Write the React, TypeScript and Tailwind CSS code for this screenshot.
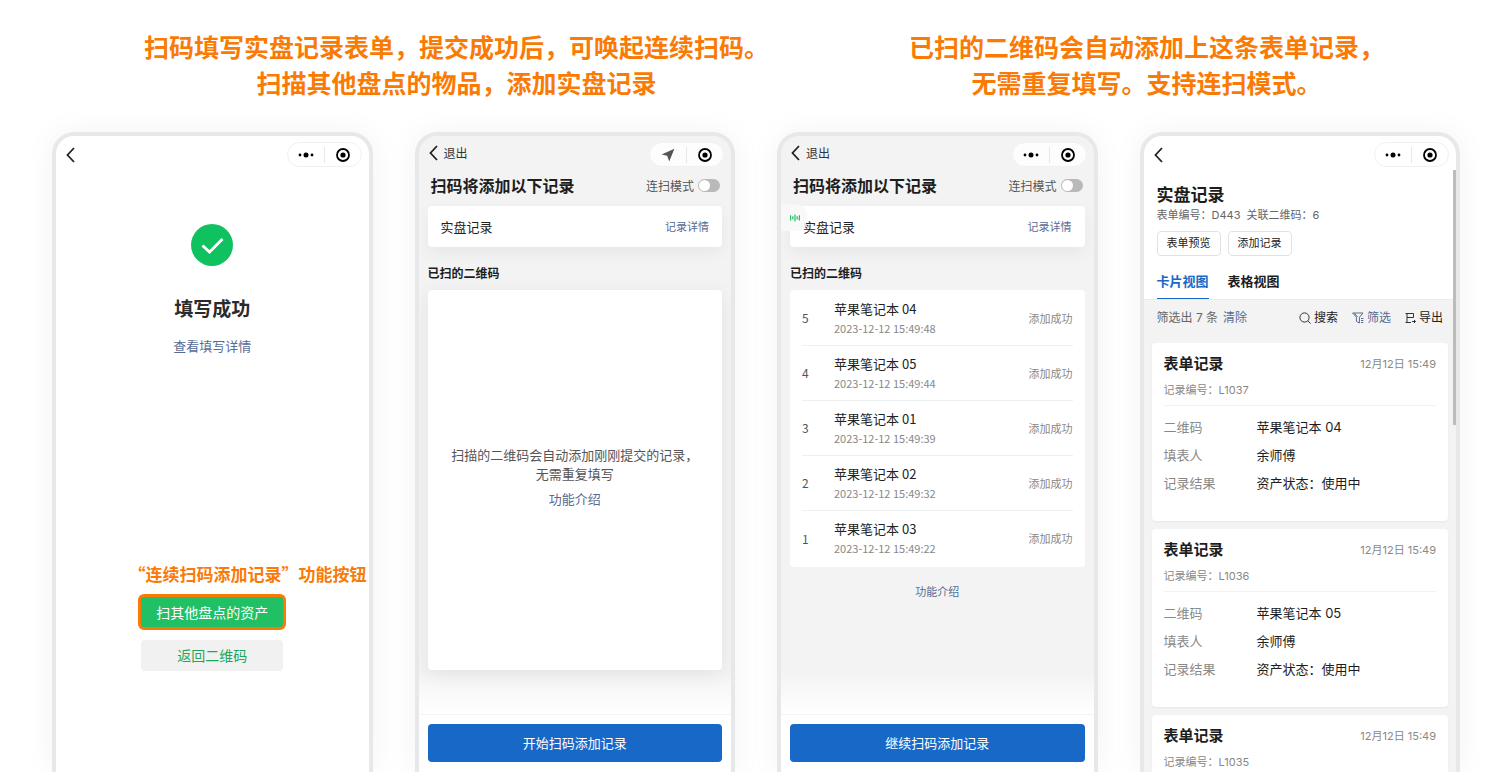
import type { ReactNode } from 'react';

const scans = [
  { index: 5, name: '苹果笔记本 04', time: '2023-12-12 15:49:48' },
  { index: 4, name: '苹果笔记本 05', time: '2023-12-12 15:49:44' },
  { index: 3, name: '苹果笔记本 01', time: '2023-12-12 15:49:39' },
  { index: 2, name: '苹果笔记本 02', time: '2023-12-12 15:49:32' },
  { index: 1, name: '苹果笔记本 03', time: '2023-12-12 15:49:22' },
];

const records = [
  { id: 'L1037', code: '苹果笔记本 04' },
  { id: 'L1036', code: '苹果笔记本 05' },
  { id: 'L1035', code: '苹果笔记本 01' },
];

function Chevron() {
  return (
    <svg width="9" height="16" viewBox="0 0 9 16" fill="none" stroke="#222" strokeWidth="1.8">
      <path d="M8 1 L1.5 8 L8 15" />
    </svg>
  );
}

function Capsule({ locating = false }: { locating?: boolean }) {
  return (
    <div className="flex h-[25px] w-[75px] items-center rounded-full border border-[#f0f0f0] bg-white/80">
      <button type="button" aria-label="更多" className="flex h-full flex-1 items-center justify-center">
        {locating ? (
          <svg width="14" height="14" viewBox="0 0 14 14" fill="#555">
            <path d="M13.4 0.8 L0.6 6.4 L6.2 7.8 L8.2 13.4 Z" />
          </svg>
        ) : (
          <svg width="16" height="6" viewBox="0 0 16 6" fill="#000">
            <circle cx="2" cy="3" r="1.4" />
            <circle cx="8" cy="3" r="2.5" />
            <circle cx="14" cy="3" r="1.4" />
          </svg>
        )}
      </button>
      <span className="h-4 w-px bg-[#e8e8e8]" />
      <button type="button" aria-label="关闭" className="flex h-full flex-1 items-center justify-center">
        <svg width="14" height="14" viewBox="0 0 14 14">
          <circle cx="7" cy="7" r="6" fill="none" stroke="#000" strokeWidth="1.8" />
          <circle cx="7" cy="7" r="2.6" fill="#000" />
        </svg>
      </button>
    </div>
  );
}

function Phone({ children, className }: { children: ReactNode; className: string }) {
  return (
    <section
      className={`relative flex min-w-0 flex-1 flex-col overflow-hidden rounded-t-[22px] border-4 border-b-0 border-[#e7e8ea] shadow-[0_0_32px_rgba(0,0,0,0.05)] ${className}`}
    >
      {children}
    </section>
  );
}

function NavBar({ label, locating }: { label?: string; locating?: boolean }) {
  return (
    <div className="flex h-[37px] shrink-0 items-center justify-between pr-[7px] pl-[10px]">
      {label ? (
        <button type="button" className="flex items-center gap-[6px] pb-1 text-[12px] leading-4 text-[#333]">
          <Chevron />
          {label}
        </button>
      ) : (
        <button type="button" aria-label="返回">
          <Chevron />
        </button>
      )}
      <Capsule locating={locating} />
    </div>
  );
}

function ScanHeader({ id }: { id: string }) {
  return (
    <>
      <div className="flex h-[25px] shrink-0 items-center justify-between pr-[2px] pl-[3px]">
        <h3 className="pb-[2px] text-[16px] font-bold text-[#1d1d1d]">扫码将添加以下记录</h3>
        <div className="flex items-center gap-1">
          <label htmlFor={id} className="text-[12px] text-[#555]">
            连扫模式
          </label>
          <input
            id={id}
            type="checkbox"
            role="switch"
            className="h-[13px] w-[22px] appearance-none rounded-full bg-[#b9b9b9] p-px before:block before:size-[11px] before:rounded-full before:bg-white checked:bg-[#1868c8] checked:before:ml-[9px]"
          />
        </div>
      </div>
      <div className="mt-2 flex h-[41px] shrink-0 items-center justify-between rounded bg-white px-[13px] shadow-[0_6px_16px_rgba(0,0,0,0.05)]">
        <span className="text-[13px] text-[#222]">实盘记录</span>
        <a href="#detail" className="text-[11px] text-[#576b95]">
          记录详情
        </a>
      </div>
      <h4 className="mt-[17px] shrink-0 text-[12px] leading-[18px] font-bold text-[#1d1d1d]">已扫的二维码</h4>
    </>
  );
}

function ScanFooter({ children }: { children: ReactNode }) {
  return (
    <div className="h-[58px] shrink-0 border-t border-[#f4f4f4] bg-white px-[9px] pt-[9px]">
      <button type="button" className="h-[38px] w-full rounded bg-[#1868c8] text-[13px] text-white">
        {children}
      </button>
    </div>
  );
}

function SuccessScreen() {
  return (
    <Phone className="bg-white">
      <NavBar />
      <div className="flex flex-col items-center">
        <svg className="mt-[51px]" width="42" height="42" viewBox="0 0 42 42">
          <circle cx="21" cy="21" r="21" fill="#10c160" />
          <path d="M11.5 21.5 L18.5 28 L31.5 15" fill="none" stroke="#fff" strokeWidth="2.8" />
        </svg>
        <h3 className="mt-7 text-[19px] leading-7 font-bold text-[#2b2b2b]">填写成功</h3>
        <a href="#filled" className="mt-[14px] text-[13px] leading-5 text-[#576b95]">
          查看填写详情
        </a>
        <p className="mt-[206px] self-end pr-[2px] text-[17px] leading-6 font-bold whitespace-nowrap text-[#f97b06]">
          “连续扫码添加记录”功能按钮
        </p>
        <button
          type="button"
          className="mt-2 h-9 w-[148px] rounded-md border-3 border-[#f97b06] bg-[#22c064] text-[14px] leading-7 text-white"
        >
          扫其他盘点的资产
        </button>
        <button type="button" className="mt-[10px] h-[31px] w-[142px] rounded-sm bg-[#f1f1f1] text-[14px] text-[#1fa757]">
          返回二维码
        </button>
      </div>
    </Phone>
  );
}

function StartScanScreen() {
  return (
    <Phone className="bg-[#f3f3f3]">
      <NavBar label="退出" locating />
      <div className="flex min-h-0 flex-1 flex-col bg-linear-to-b from-[#f3f3f3] from-92% to-white px-[9px]">
        <ScanHeader id="start-mode" />
        <div className="mt-2 mb-11 flex flex-1 flex-col items-center justify-center rounded bg-white pb-2 text-center text-[13px] leading-[19px] text-[#555] shadow-[0_4px_20px_rgba(0,0,0,0.07)]">
          <p>
            扫描的二维码会自动添加刚刚提交的记录，
            <br />
            无需重复填写
          </p>
          <a href="#intro" className="mt-[6px] text-[#576b95]">
            功能介绍
          </a>
        </div>
      </div>
      <ScanFooter>开始扫码添加记录</ScanFooter>
    </Phone>
  );
}

function ContinueScanScreen() {
  return (
    <Phone className="bg-[#f3f3f3]">
      <NavBar label="退出" />
      <div className="flex min-h-0 flex-1 flex-col bg-linear-to-b from-[#f3f3f3] from-92% to-white px-[9px]">
        <ScanHeader id="continue-mode" />
        <ul className="mt-2 rounded bg-white px-3 py-px">
          {scans.map((scan) => (
            <li key={scan.index} className="flex h-[55px] items-center border-b border-[#ebf0f0] last:border-b-0">
              <span className="w-8 text-[12px] text-[#555]">{scan.index}</span>
              <div className="flex-1 pb-px">
                <p className="text-[13px] leading-5 text-[#222]">{scan.name}</p>
                <p className="text-[11px] leading-[18px] text-[#888]">{scan.time}</p>
              </div>
              <span className="text-[11px] text-[#888]">添加成功</span>
            </li>
          ))}
        </ul>
        <a href="#intro" className="mt-4 self-center text-[11px] leading-4 text-[#576b95]">
          功能介绍
        </a>
      </div>
      <ScanFooter>继续扫码添加记录</ScanFooter>
      {/* floating voice handle, half over the form card */}
      <div className="absolute top-[68px] left-0 flex h-[27px] w-[26px] items-center rounded-r-[12px] bg-[#f8f8f8]/90 pl-[9px]">
        <svg width="10" height="8" viewBox="0 0 10 8" stroke="#1fc065" strokeWidth="1.2">
          <path d="M0.6 1.2 V6.4 M2.8 2.2 V5.6 M5 0.6 V7.4 M7.2 2.2 V5.6 M9.4 1.2 V6.4" />
        </svg>
      </div>
    </Phone>
  );
}

function RecordCard({ id, code }: { id: string; code: string }) {
  return (
    <article className="h-[178px] shrink-0 rounded bg-white px-3 pt-[9px] shadow-[0_1px_2px_rgba(0,0,0,0.05)]">
      <div className="flex h-6 items-center justify-between">
        <h4 className="text-[15px] font-bold text-[#1d1d1d]">表单记录</h4>
        <time className="text-[11px] text-[#888]">12月12日 15:49</time>
      </div>
      <p className="mt-[5px] h-[25px] border-b border-[#f2f2f2] text-[11px] leading-[18px] text-[#888]">记录编号：{id}</p>
      <dl className="mt-[7px] grid grid-cols-[93px_1fr] text-[13px] leading-7">
        <dt className="text-[#888]">二维码</dt>
        <dd className="text-[#1d1d1d]">{code}</dd>
        <dt className="text-[#888]">填表人</dt>
        <dd className="text-[#1d1d1d]">余师傅</dd>
        <dt className="text-[#888]">记录结果</dt>
        <dd className="text-[#1d1d1d]">资产状态：使用中</dd>
      </dl>
    </article>
  );
}

function RecordsScreen() {
  return (
    <Phone className="bg-white font-['Inter','Noto_Sans_CJK_SC',sans-serif]">
      <NavBar />
      <div className="shrink-0 px-[13px] pt-[10px]">
        <h3 className="text-[17px] leading-6 font-bold text-[#1d1d1d]">实盘记录</h3>
        <p className="text-[11px] leading-4 text-[#666]">
          <span>表单编号：D443</span>
          <span className="ml-[6px]">关联二维码：6</span>
        </p>
        <div className="mt-2 flex gap-[7px] text-[11px] text-[#222]">
          <button type="button" className="h-[25px] w-16 rounded-sm border border-[#e2e2e2]">
            表单预览
          </button>
          <button type="button" className="h-[25px] w-16 rounded-sm border border-[#e2e2e2]">
            添加记录
          </button>
        </div>
        <div className="mt-3 flex gap-[19px] text-[13px] font-bold">
          <button type="button" className="h-8 border-b-2 border-[#1868c8] pb-[2px] text-[#1868c8]">
            卡片视图
          </button>
          <button type="button" className="h-8 border-b-2 border-transparent pb-[2px] text-[#1d1d1d]">
            表格视图
          </button>
        </div>
      </div>
      <div className="flex min-h-0 flex-1 flex-col overflow-hidden bg-[#f3f3f3] px-2 shadow-[0_-1px_0_#e9ebec]">
        <div className="flex h-[35px] shrink-0 items-center justify-between px-[5px] text-[12px] text-[#222]">
          <p className="text-[#666]">
            筛选出 7 条
            <a href="#clear" className="ml-[5px] text-[#576b95]">
              清除
            </a>
          </p>
          <div className="flex gap-[14px]">
            <button type="button" className="flex items-center gap-[3px]">
              <svg width="12" height="12" viewBox="0 0 12 12" fill="none" stroke="#333" strokeWidth="1">
                <circle cx="5.5" cy="5.5" r="4.6" />
                <path d="M8.8 8.8 L11.6 11.6" />
              </svg>
              搜索
            </button>
            <button type="button" className="flex items-center gap-[3px] text-[#576b95]">
              <svg width="12" height="12" viewBox="0 0 12 12" fill="none" stroke="#576b95" strokeWidth="1">
                <path d="M0.6 1 H11 L7.4 5.2 V11 L4.4 9.4 V5.2 Z M2.4 1.2 L5.6 5 M9 6.5 H11.4 M9 8.5 H11.4 M9 10.5 H11.4" />
              </svg>
              筛选
            </button>
            <button type="button" className="flex items-center gap-[3px]">
              <svg width="11" height="12" viewBox="0 0 11 12" fill="none" stroke="#333" strokeWidth="1">
                <path d="M0.5 1.5 H8.5 V5.5 H2 M2 1.5 V10.5 M0.5 10.5 H6 M7 9.5 H10.5 M9 8 L10.5 9.5 L9 11" />
              </svg>
              导出
            </button>
          </div>
        </div>
        <div className="mt-2 flex flex-col gap-2">
          {records.map((record) => (
            <RecordCard key={record.id} id={record.id} code={record.code} />
          ))}
        </div>
      </div>
      <div className="absolute top-[34px] right-0 h-[255px] w-[3px] bg-[#bcbcbc]" />
    </Phone>
  );
}

export default function App() {
  return (
    <main className="flex h-screen flex-col overflow-hidden bg-white pt-7 font-['Noto_Sans_CJK_SC',sans-serif]">
      <header className="flex shrink-0 justify-between pr-[116px] pl-36 text-center text-[25px] leading-9 font-bold text-[#f97b06]">
        <h2>
          扫码填写实盘记录表单，提交成功后，可唤起连续扫码。
          <br />
          扫描其他盘点的物品，添加实盘记录
        </h2>
        <h2>
          已扫的二维码会自动添加上这条表单记录，
          <br />
          无需重复填写。支持连扫模式。
        </h2>
      </header>
      <div className="mt-8 flex min-h-0 flex-1 gap-[42px] pr-10 pl-[52px]">
        <SuccessScreen />
        <StartScanScreen />
        <ContinueScanScreen />
        <RecordsScreen />
      </div>
    </main>
  );
}
